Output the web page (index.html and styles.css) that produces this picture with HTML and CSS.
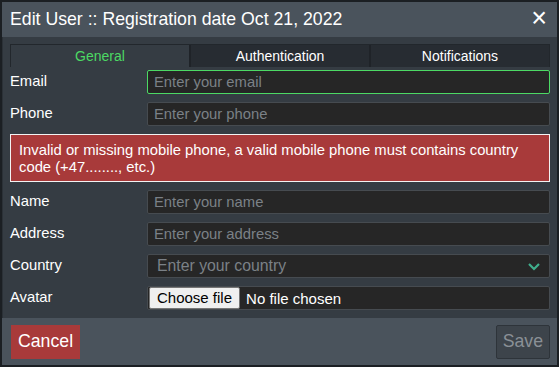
FILE: index.html
```html
<!DOCTYPE html>
<html lang="en">
<head>
  <meta charset="UTF-8">
  <title>Edit User</title>
  <link rel="stylesheet" href="styles.css">
</head>
<body>
  <div class="dialog">
    <div class="dialog-header">
      <span class="dialog-title">Edit User :: Registration date Oct 21, 2022</span>
      <span class="close">&times;</span>
    </div>

    <div class="dialog-body">
      <div class="tabs">
        <div class="tab active">General</div>
        <div class="tab">Authentication</div>
        <div class="tab">Notifications</div>
      </div>

      <div class="form">
        <div class="row">
          <label>Email</label>
          <input type="text" class="field focus" placeholder="Enter your email">
        </div>
        <div class="row">
          <label>Phone</label>
          <input type="text" class="field" placeholder="Enter your phone">
        </div>

        <div class="error">
          Invalid or missing mobile phone, a valid mobile phone must contains country code (+47........, etc.)
        </div>

        <div class="row">
          <label>Name</label>
          <input type="text" class="field" placeholder="Enter your name">
        </div>
        <div class="row">
          <label>Address</label>
          <input type="text" class="field" placeholder="Enter your address">
        </div>
        <div class="row">
          <label>Country</label>
          <div class="field select">
            <span>Enter your country</span>
            <svg width="14" height="9" viewBox="0 0 14 9"><path d="M2 2 L7 7 L12 2" fill="none" stroke="#3fae8c" stroke-width="2.2"/></svg>
          </div>
        </div>
        <div class="row">
          <label>Avatar</label>
          <div class="field file">
            <span class="file-btn">Choose file</span>
            <span>No file chosen</span>
          </div>
        </div>
      </div>
    </div>

    <div class="dialog-footer">
      <button class="btn cancel">Cancel</button>
      <button class="btn save">Save</button>
    </div>
  </div>
</body>
</html>
```

FILE: styles.css
```css
body {
  margin: 0;
  padding: 2px;
  background: #1b1f23;
  font-family: "Liberation Sans", Arial, sans-serif;
  color: #fff;
}
.dialog {
  width: 555px;
  height: 363px;
  display: flex;
  flex-direction: column;
}
.dialog-header {
  height: 35px;
  flex-shrink: 0;
  background: #4a535c;
  display: flex;
  align-items: center;
  justify-content: space-between;
  padding: 0 10px 0 8px;
}
.dialog-title {
  font-size: 17.7px;
}
.close {
  font-size: 27px;
  line-height: 1;
  margin-top: -2px;
}
.dialog-body {
  flex: 1;
  background: #353c43;
  padding: 7px 7px 0 7px;
  border-left: 1px solid #2b3137;
}
.tabs {
  display: flex;
  height: 22px;
  border: 1px solid #22272c;
  border-bottom: none;
}
.tab {
  flex: 1;
  background: #272c32;
  font-size: 14px;
  text-align: center;
  line-height: 22px;
  border-left: 2px solid #1f2328;
}
.tab:first-child {
  border-left: none;
}
.tab.active {
  background: #353c43;
  color: #4cd964;
}
.form {
  display: flex;
  flex-direction: column;
  gap: 8px;
  margin-top: 3px;
}
.row {
  display: flex;
  align-items: center;
}
.row label {
  width: 137px;
  flex-shrink: 0;
  font-size: 14.8px;
  margin-top: -3px;
}
.field {
  flex: 1;
  min-width: 0;
  height: 24px;
  box-sizing: border-box;
  background: #262626;
  border: 1px solid #464b50;
  border-radius: 2px;
  font-family: inherit;
  font-size: 14.8px;
  color: #fff;
  padding: 0 6px;
  outline: none;
}
.field::placeholder {
  color: #7b8187;
}
.field.focus {
  border-color: #4cd964;
}
.select {
  display: flex;
  align-items: center;
  justify-content: space-between;
  color: #7b8187;
  font-size: 15.8px;
  padding: 0 8px 0 9px;
}
.file {
  display: flex;
  align-items: center;
  padding: 0 0 0 1px;
  font-size: 15px;
}
.file-btn {
  background: #efefef;
  color: #000;
  border: 1px solid #767676;
  border-radius: 2px;
  height: 20px;
  line-height: 20px;
  padding: 0 7px;
  margin-right: 6px;
}
.error {
  background: #a83a3a;
  border: 1px solid #f3f3f3;
  font-size: 14.8px;
  line-height: 17px;
  padding: 7px 8px 5px 8px;
}
.dialog-footer {
  height: 47px;
  flex-shrink: 0;
  background: #4a535c;
  display: flex;
  justify-content: space-between;
  align-items: center;
  padding: 0 7px 0 9px;
}
.btn {
  font-family: inherit;
  font-size: 17.7px;
  height: 34px;
  padding: 0 7px;
  border-radius: 0;
}
.cancel {
  background: #a83a3a;
  color: #fff;
  border: none;
}
.save {
  background: #3d444b;
  color: #8a9096;
  border: 1px solid #2e343a;
  border-radius: 2px;
  padding: 0 6px;
}
```
